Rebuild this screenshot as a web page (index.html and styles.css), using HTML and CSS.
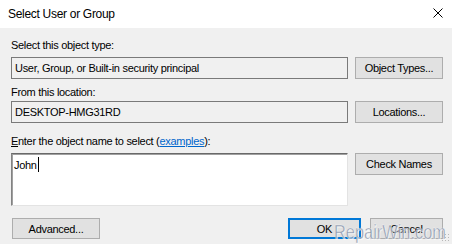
FILE: index.html
```html
<!DOCTYPE html>
<html lang="en">
<head>
    <meta charset="UTF-8">
    <meta name="viewport" content="width=device-width, initial-scale=1.0">
    <title>Select User or Group</title>
    <link rel="stylesheet" href="styles.css">
</head>
<body>
    <div class="dialog">
        <div class="titlebar">
            <span class="title">Select User or Group</span>
            <svg class="close" width="10" height="10" viewBox="0 0 10 10">
                <path d="M0.5 0.5 L9.5 9.5 M9.5 0.5 L0.5 9.5" stroke="#000" stroke-width="1"/>
            </svg>
        </div>

        <div class="content">
            <div class="label">Select this object type:</div>
            <div class="row row-first">
                <div class="field">User, Group, or Built-in security principal</div>
                <button class="btn">Object Types...</button>
            </div>

            <div class="label">From this location:</div>
            <div class="row row-second">
                <div class="field">DESKTOP-HMG31RD</div>
                <button class="btn">Locations...</button>
            </div>

            <div class="label"><u>E</u>nter the object name to select (<a href="#" class="link">examples</a>):</div>
            <div class="row row-third">
                <div class="names">John<span class="caret"></span></div>
                <button class="btn">Check Names</button>
            </div>

            <div class="footer">
                <button class="btn">Advanced...</button>
                <div class="actions">
                    <button class="btn btn-default">OK</button>
                    <button class="btn">Cancel</button>
                </div>
            </div>
        </div>

        <!-- site watermark over the corner -->
        <div class="watermark">RepairWin.com</div>
        <div class="grip"></div>
    </div>
</body>
</html>
```

FILE: styles.css
```css
body {
    margin: 0;
    padding: 0;
    font-family: "Liberation Sans", Arial, sans-serif;
    font-size: 11px;
    letter-spacing: -0.3px;
    color: #000;
}
.dialog {
    position: relative;
    width: 452px;
    height: 244px;
    background-color: #f0f0f0;
    overflow: hidden;
}
.titlebar {
    height: 28px;
    background-color: #fff;
    display: flex;
    align-items: center;
    justify-content: space-between;
    padding: 0 8px 0 8px;
    box-sizing: border-box;
}
.title {
    font-size: 12px;
    margin-top: -1px;
}
.close {
    margin-right: 1px;
    margin-top: -2px;
}
.content {
    display: flex;
    flex-direction: column;
    padding: 11px 9px 0 11px;
}
.label {
    line-height: 13px;
    height: 13px;
}
.row {
    display: flex;
    align-items: flex-start;
    gap: 7px;
}
.row-first {
    margin-top: 5px;
    margin-bottom: 7px;
}
.row-second {
    margin-top: 2px;
    margin-bottom: 12px;
}
.row-third {
    margin-top: 5px;
    margin-bottom: 12px;
}
.field {
    width: 337px;
    height: 22px;
    box-sizing: border-box;
    border: 1px solid #7a7a7a;
    background-color: #f0f0f0;
    padding: 0 3px;
    line-height: 20px;
}
.btn {
    width: 88px;
    height: 22px;
    padding: 0;
    font-family: "Liberation Sans", Arial, sans-serif;
    font-size: 11px;
    letter-spacing: -0.3px;
    color: #000;
    background-color: #e1e1e1;
    border: 1px solid #adadad;
    box-sizing: border-box;
}
.link {
    color: #0066cc;
}
.names {
    width: 337px;
    height: 53px;
    box-sizing: border-box;
    background-color: #fff;
    border: 1px solid;
    border-color: #696969 #e3e3e3 #e3e3e3 #828282;
    box-shadow: inset 1px 1px 0 #a0a0a0;
    padding: 3px 2px;
    line-height: 13px;
}
.caret {
    display: inline-block;
    width: 1px;
    height: 15px;
    background-color: #000;
    vertical-align: -3px;
    margin-left: 1px;
}
.footer {
    display: flex;
    justify-content: space-between;
}
.footer .btn {
    height: 21px;
}
.footer > .btn {
    margin-left: 1px;
}
.actions {
    display: flex;
    gap: 9px;
}
.actions .btn {
    width: 73px;
}
.btn-default {
    border: 2px solid #0078d7;
}
.watermark {
    position: absolute;
    left: 334px;
    top: 220px;
    font-size: 21px;
    letter-spacing: 0;
    color: rgba(130, 142, 165, 0.85);
    -webkit-text-stroke: 0.5px rgba(255, 255, 255, 0.7);
    text-shadow: 1px 1px 0 rgba(255, 255, 255, 0.6);
    transform: scaleX(0.78);
    transform-origin: left top;
}
.grip {
    position: absolute;
    right: 1px;
    bottom: 1px;
    width: 10px;
    height: 10px;
    background-image: radial-gradient(#b8b8b8 0.8px, transparent 1px);
    background-size: 3px 3px;
}
```
